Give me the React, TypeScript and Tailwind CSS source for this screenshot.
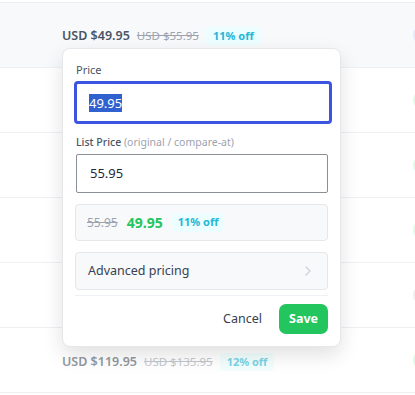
import { ChevronRight } from "lucide-react";

type Row = {
  price?: string;
  list?: string;
  off?: string;
  pill: string;
  active?: boolean;
  muted?: boolean;
};

const rows: Row[] = [
  { price: "USD $49.95", list: "USD $55.95", off: "11% off", pill: "bg-[#e3e8fb]", active: true },
  { pill: "bg-[#dcfce7]" },
  { pill: "bg-[#dcfce7]" },
  { pill: "bg-[#dcfce7]" },
  { pill: "bg-[#eeeff2]" },
  { price: "USD $119.95", list: "USD $135.95", off: "12% off", pill: "bg-[#dcfce7]", muted: true },
];

function PriceRow({ row }: { row: Row }) {
  return (
    <div
      className={`flex h-[65px] shrink-0 items-center border-b border-[#eef0f3] pl-[62px] ${
        row.active ? "bg-[#f8f9fb]" : "bg-white"
      }`}
    >
      {row.price && (
        <div className={`mt-[2px] flex items-center gap-[7px] ${row.muted ? "mt-[4px] opacity-60" : ""}`}>
          <span className="text-[12.5px] font-semibold text-[#4b5563]">{row.price}</span>
          <span className="text-[11.5px] text-[#9ca3af] line-through">{row.list}</span>
          <span className="rounded-[4px] bg-[#ecfeff] px-[7px] py-[1px] text-[11px] font-bold text-[#22b8d6]">
            {row.off}
          </span>
        </div>
      )}
      <div className="flex-1" />
      <div className={`mr-[-21px] h-[20px] w-[23px] rounded-full ${row.pill}`} />
    </div>
  );
}

export default function App() {
  return (
    <div
      className="relative h-[395px] w-[415px] overflow-hidden bg-white"
      style={{ fontFamily: '"Noto Sans", "Open Sans", sans-serif' }}
    >
      <div className="mt-[2px] flex flex-col border-t border-[#eef0f3]">
        {rows.map((r, i) => (
          <PriceRow key={i} row={r} />
        ))}
      </div>

      <div className="absolute left-[62px] top-[48px] flex w-[279px] flex-col rounded-[8px] border border-[#e5e7eb] bg-white px-[12px] pb-[12px] pt-[14px] shadow-[0_8px_20px_rgba(0,0,0,0.12)]">
        <label className="pl-[1px] text-[11px] leading-[14px] text-[#4b5563]">Price</label>
        <div className="-ml-[1px] mt-[4px] flex h-[43px] w-[258px] items-center rounded-[4px] border-[3px] border-[#3b55e0] pl-[12px]">
          <span className="bg-[#2f62cf] text-[13px] leading-[18px] text-white">49.95</span>
        </div>

        <label className="mt-[11px] pl-[1px] text-[10.5px] leading-[14px]">
          <span className="font-medium text-[#4b5563]">List Price</span>{" "}
          <span className="text-[#9ca3af]">(original / compare-at)</span>
        </label>
        <div className="ml-[1px] mt-[5px] flex h-[39px] items-center rounded-[2px] border border-[#8b8f96] pl-[13px] text-[13px] text-[#1f2937]">
          55.95
        </div>

        <div className="mt-[11px] flex h-[37px] items-center gap-[9px] rounded-[4px] border border-[#e5e7eb] bg-[#f8f9fb] pl-[11px]">
          <span className="text-[12px] text-[#9ca3af] line-through">55.95</span>
          <span className="text-[14px] font-bold text-[#22c55e]">49.95</span>
          <span className="rounded-[4px] bg-[#ecfeff] px-[6px] py-[1px] text-[11px] font-bold text-[#22b8d6]">
            11% off
          </span>
        </div>

        <div className="mt-[11px] flex h-[38px] items-center justify-between rounded-[4px] border border-[#e5e7eb] bg-[#f8f9fb] pl-[12px] pr-[11px]">
          <span className="mt-[1px] text-[12.5px] text-[#374151]">Advanced pricing</span>
          <ChevronRight size={16} strokeWidth={2.2} className="text-[#d1d5db]" />
        </div>

        <div className="mt-[5px] h-px bg-[#eef0f3]" />

        <div className="mt-[8px] flex items-center justify-end gap-[17px]">
          <button className="text-[12.5px] text-[#374151]">Cancel</button>
          <button className="h-[30px] w-[49px] rounded-[7px] bg-[#22c55e] text-[12.5px] font-bold text-white">
            Save
          </button>
        </div>
      </div>
    </div>
  );
}
